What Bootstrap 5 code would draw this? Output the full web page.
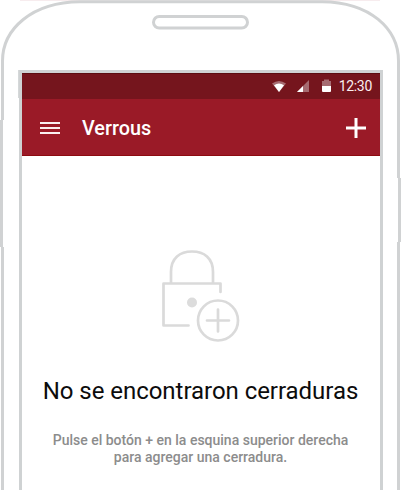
<!DOCTYPE html>
<html lang="es">
<head>
<meta charset="utf-8">
<meta name="viewport" content="width=device-width, initial-scale=1">
<title>Verrous</title>
<link href="https://cdn.jsdelivr.net/npm/bootstrap@5.3.0/dist/css/bootstrap.min.css" rel="stylesheet">
<style>
body{font-family:Roboto,"Liberation Sans",sans-serif;background:#fff}
.phone{width:401px;height:490px;padding:70px 18px 0 19px}
.shell{inset:0;width:401px;height:490px}
.screen{width:364px;height:420px;border:solid #cfd2d3;border-width:3px 3px 0 3px}
.statusbar{height:26px;background:#75151d;padding-right:8px;border-top:1px solid #5c0d12}
.clock{font-size:14px;line-height:24px;height:25px;letter-spacing:-.3px;color:#fbeff0}
.appbar{height:57px;background:#9a1a27;border-bottom:1px solid #8d0b10;padding:2px 14px 0 17px}
.apptitle{font-size:19.8px;font-weight:500;line-height:24px;margin-left:21px;padding-top:2px}
.empty-icon{margin-top:92px;margin-left:-2px}
.headline{font-size:24px;font-weight:400;line-height:30px;margin-top:34px;margin-left:-1px;color:#0c0c0c;white-space:nowrap;letter-spacing:-.04px}
.hint{font-size:14px;font-weight:500;line-height:16.5px;margin-top:26px;margin-left:-1px;color:#8c8c8c;white-space:nowrap}
</style>
</head>
<body class="m-0 overflow-hidden">
<div class="phone position-relative overflow-hidden">
<svg class="shell position-absolute" viewBox="0 0 401 490" fill="none" stroke="#d0d2d3" stroke-width="3" aria-hidden="true">
<path d="M20 .2H380" stroke="#f4e4e7" stroke-width="1"/>
<path d="M2.500 120V61C2.500 29 32 2 80 1.700H322C370 2 398.500 29 398.500 61V178"/>
<path d="M1.500 120V247M2.500 247V490M399.500 178V242M398.500 242V490"/>
<rect x="153.500" y="16.500" width="94" height="11.500" rx="5.750"/>
<path d="M18.500 70V98M382.500 70V98" stroke="#d5d8d9" stroke-width="1"/>
</svg>
<main class="screen d-flex flex-column position-relative">
<div class="statusbar d-flex align-items-center justify-content-end flex-shrink-0">
<svg width="67" height="16" viewBox="0 0 67 16" aria-hidden="true">
<path d="M0 4.500Q7 -.5 14 4.500L7 13Z" fill="#a66b71"/><path d="M2 6.200Q7 3 12 6.200L7 13Z" fill="#fff"/>
<path d="M25 13L37 1V13Z" fill="#a66b71"/><path d="M25 13L31 7V13Z" fill="#fff"/>
<path d="M50 2H52V.5H57V2H59V7H50Z" fill="#a66b71"/><path d="M50 7H59V12Q59 13 58 13H51Q50 13 50 12Z" fill="#fff"/>
</svg>
<span class="clock">12:30</span>
</div>
<header class="appbar d-flex align-items-center text-white flex-shrink-0">
<svg width="22" height="14" viewBox="0 0 22 14" aria-hidden="true"><path d="M1 2H21M1 7H21M1 12H21" stroke="#fbeff0" stroke-width="2"/></svg>
<span class="apptitle">Verrous</span>
<svg class="ms-auto" width="20" height="20" viewBox="0 0 20 20" aria-hidden="true"><path d="M0 10H20M10 0V20" stroke="#fff" stroke-width="3"/></svg>
</header>
<section class="text-center d-flex flex-column align-items-center">
<svg class="empty-icon" width="80" height="94" viewBox="160 248 80 94" fill="none" stroke="#dadada" stroke-width="2.700" stroke-linecap="round" stroke-linejoin="round" aria-hidden="true">
<path d="M171 283V272C171 258 180 251.500 192 251.500S213 258 213 272V283M220.500 292V283.500H163.500V325.500H188.500"/>
<circle cx="192" cy="302.500" r="5" fill="#dcdcdc" stroke="none"/>
<circle cx="218" cy="320.500" r="20"/>
<path d="M207 320.500H229M218 309.500V331.500"/>
</svg>
<h1 class="headline mb-0">No se encontraron cerraduras</h1>
<p class="hint mb-0">Pulse el botón + en la esquina superior derecha<br>para agregar una cerradura.</p>
</section>
</main>
</div>
<script src="https://cdn.jsdelivr.net/npm/bootstrap@5.3.0/dist/js/bootstrap.bundle.min.js"></script>
</body>
</html>
